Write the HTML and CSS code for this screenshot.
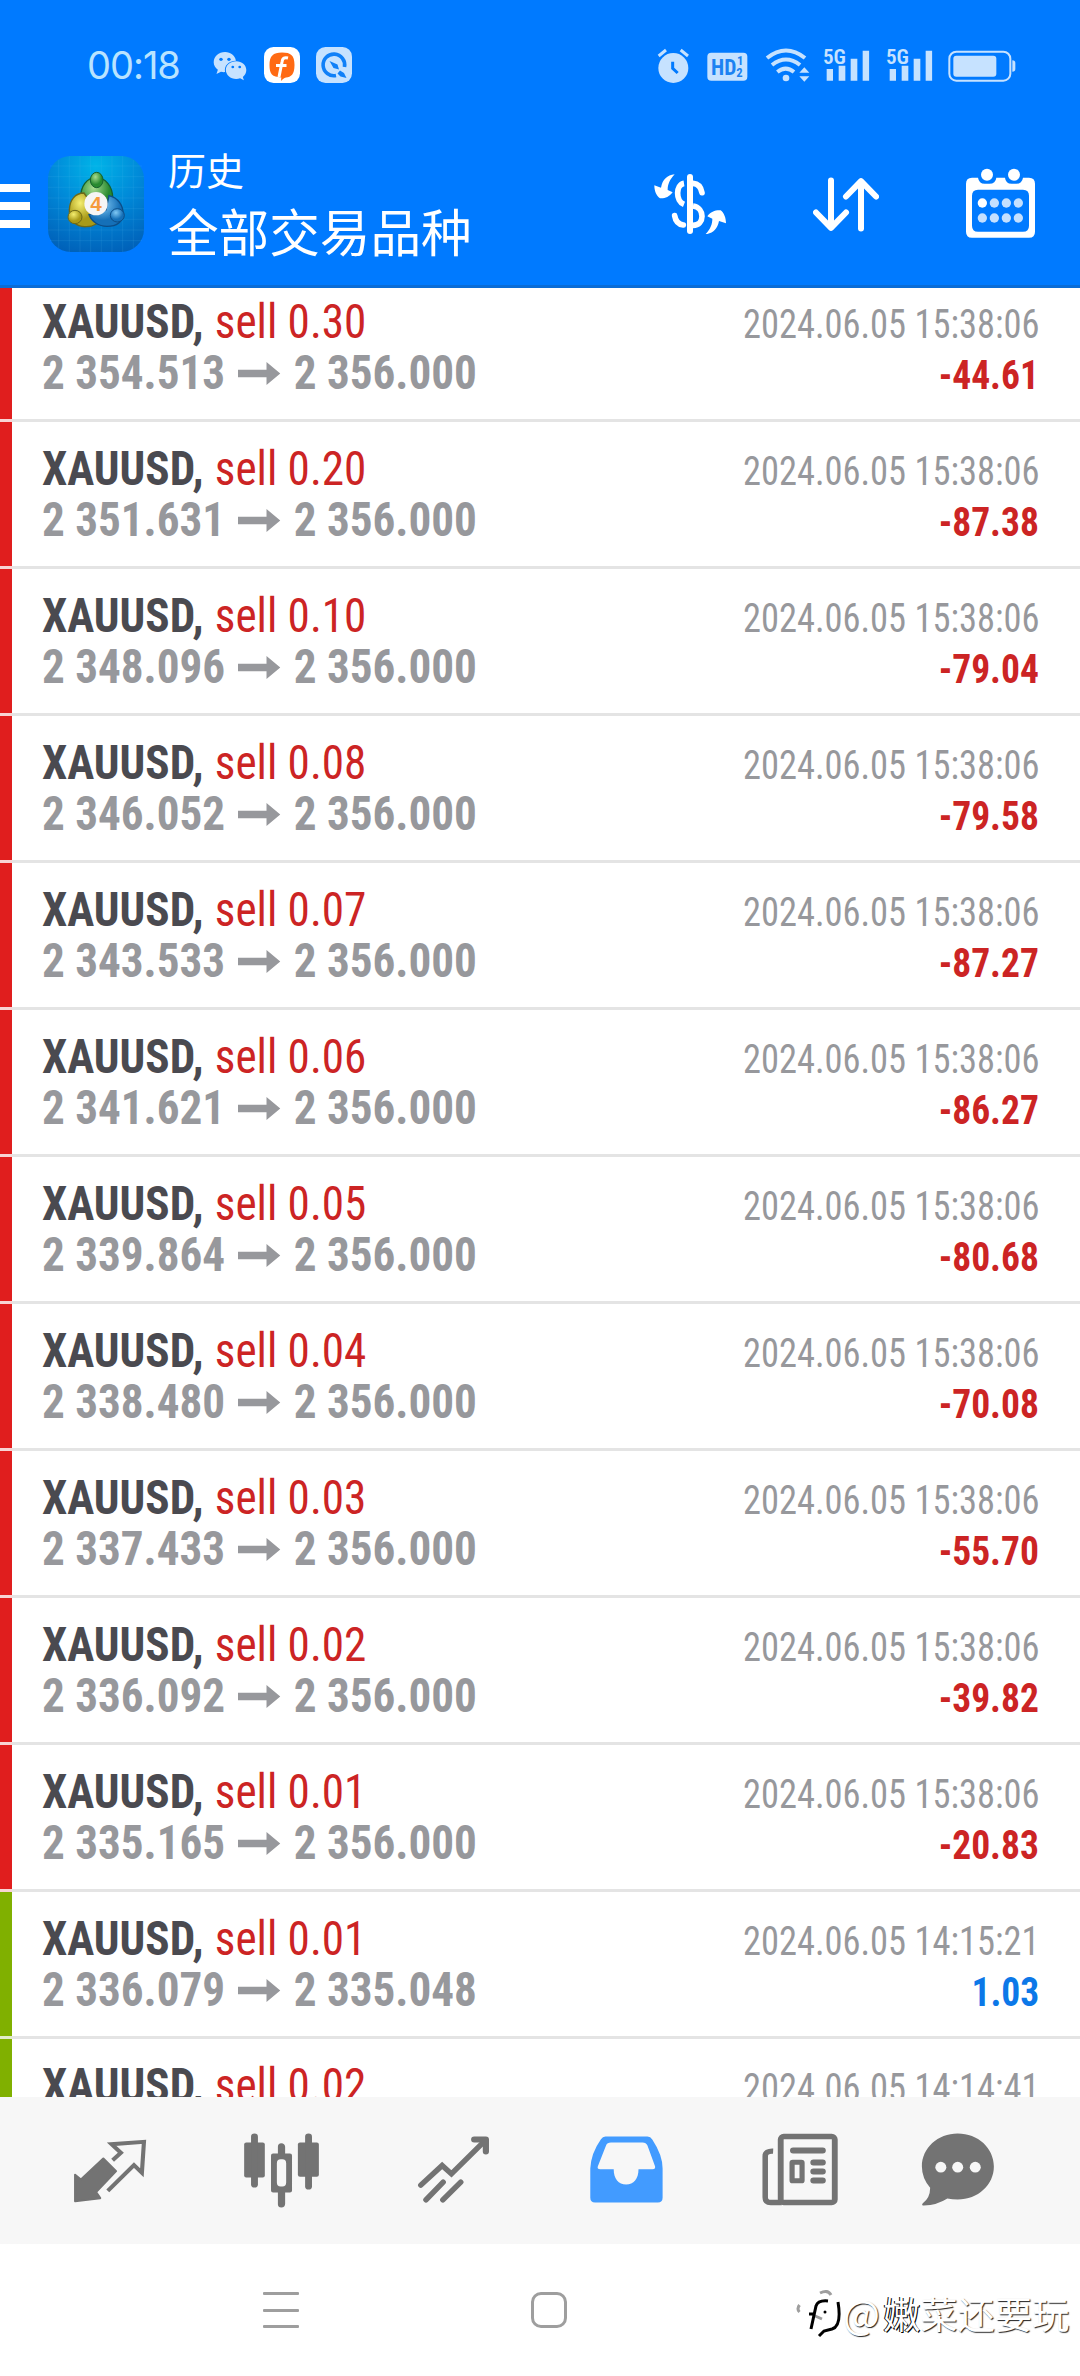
FILE: index.html
```html
<!DOCTYPE html>
<html lang="zh-CN">
<head>
<meta charset="utf-8">
<title>历史</title>
<link rel="stylesheet" href="styles.css">
</head>
<body>
<svg class="defs" width="0" height="0" aria-hidden="true">
  <symbol id="arrow" viewBox="0 0 43 22"><path d="M0 7.3h29V0l14 11-14 11v-7.3H0z" fill="currentColor"/></symbol>
  <symbol id="signal" viewBox="0 0 138 100"><path d="M10 62h19v35H10zM46 52h20v45H46zM82 31h20v66H82zM118 7h20v90h-20z" fill="currentColor"/></symbol>
</svg>

<header class="header">
  <div class="status">
    <span class="clock">00:18</span>
    <svg class="wechat" width="34" height="30" viewBox="619 90 98 90" preserveAspectRatio="none">
      <path fill="#c6e2ff" d="M654 93c-19 0-33 14-33 31 0 10 5 17 12 22l-4 13 13-7c5 1 8 2 12 1-4-18 10-34 31-34-2-15-15-26-31-26z"/>
      <path fill="#c6e2ff" d="M686 121c-17 0-30 12-30 26s13 27 30 27c4 0 8-1 11-2l11 6-3-10c6-5 10-12 10-21 0-14-13-26-29-26z"/>
      <g fill="#007aff"><circle cx="642" cy="115" r="5"/><circle cx="665" cy="115" r="5"/><circle cx="676" cy="138" r="4"/><circle cx="696" cy="138" r="4"/></g>
    </svg>
    <svg class="app" width="36" height="36" viewBox="0 0 36 36">
      <rect width="36" height="36" rx="9.5" fill="#fff"/>
      <path fill="#ff6a13" d="M18 5.500c9 0 12.500 3 12.500 12.500S27 30 22 30.500c-2 .3-4 2.500-5 3.500l.3-3.600C8 30 5.500 27 5.500 18S9 5.500 18 5.500z"/>
      <path fill="none" stroke="#fff" stroke-width="3" d="M24 11c-4-1-5.500.5-6 4l-3 15M12 18.500h10.500"/>
    </svg>
    <svg class="app" width="36" height="36" viewBox="0 0 36 36">
      <rect width="36" height="36" rx="9.500" fill="#c6e2ff"/>
      <path fill="none" stroke="#1080f8" stroke-width="3.600" d="M28.500 20A10.800 10.800 0 1 0 20 28.500"/>
      <path fill="#1080f8" d="M13.500 14l8 3.500 1.500 5-5.500-1.500zM24 23.500l4 2.500 2.500 5-6-1.500-3-3z"/>
    </svg>
    <svg class="sys" width="360" height="36" viewBox="110 82 1080 108">
      <g fill="#c6e2ff" color="#c6e2ff">
        <circle cx="159" cy="142" r="45"/>
        <path d="M115 106l22-18M203 106l-22-18" stroke="#c6e2ff" stroke-width="9"/>
        <path d="M157 123v20l15 14" fill="none" stroke="#007aff" stroke-width="9"/>
        <rect x="261" y="96" width="120" height="84" rx="12"/>
        <path fill="none" stroke="#c6e2ff" stroke-width="12" d="M440 112q57-45 114 0M455 133q42-33 84 0M471 154q25-20 50 0"/>
        <circle cx="497" cy="172" r="10"/>
        <path d="M537 156l15-16 15 16zM537 167h30l-15 16z"/>
        <use href="#signal" x="609" y="83" width="138" height="100"/>
        <use href="#signal" x="798" y="83" width="138" height="100"/>
        <rect x="987" y="93" width="183" height="87" rx="21" fill="none" stroke="#c6e2ff" stroke-width="6"/>
        <rect x="999" y="105" width="129" height="63" rx="9"/>
        <path d="M1176 119q9 0 9 8v18q0 8-9 8z"/>
        <g class="band"><text x="608" y="129" font-size="63" textLength="69" lengthAdjust="spacingAndGlyphs">5G</text>
        <text x="797" y="129" font-size="63" textLength="69" lengthAdjust="spacingAndGlyphs">5G</text></g>
        <g class="hd"><text x="272" y="162" font-size="68" textLength="76" lengthAdjust="spacingAndGlyphs">HD</text>
        <text x="350" y="134" font-size="38">1</text><text x="348" y="169" font-size="38">2</text></g>
      </g>
    </svg>
  </div>
  <div class="toolbar">
    <div class="burger"><i></i><i></i><i></i></div>
    <svg class="logo" width="96" height="96" viewBox="24 18 288 288">
      <defs>
        <radialGradient id="sky" cx=".5" cy=".1" r=".95"><stop offset="0" stop-color="#00b4e8"/><stop offset=".5" stop-color="#0088d8"/><stop offset="1" stop-color="#0060b8"/></radialGradient>
        <radialGradient id="gr" cx=".4" cy=".3"><stop offset="0" stop-color="#a8dc90"/><stop offset="1" stop-color="#288a30"/></radialGradient>
        <radialGradient id="ye" cx=".4" cy=".3"><stop offset="0" stop-color="#f4ee70"/><stop offset="1" stop-color="#a89a18"/></radialGradient>
        <radialGradient id="bl" cx=".4" cy=".3"><stop offset="0" stop-color="#80c8f4"/><stop offset="1" stop-color="#1570b8"/></radialGradient>
      </defs>
      <rect x="24" y="18" width="288" height="288" rx="68" fill="url(#sky)"/>
      <path stroke="#5cc4f0" stroke-opacity=".2" stroke-width="2" d="M56 30v264M88 18v288M120 18v288M152 18v288M184 18v288M216 18v288M248 18v288M280 30v264M30 48h276M24 80h288M24 112h288M24 144h288M24 176h288M24 208h288M24 240h288M30 272h276"/>
      <path d="M122 143c0-34 18-60 46-60s50 25 50 61c0 19-9 35-24 42l-52-36z" fill="url(#gr)" stroke="#17602e" stroke-width="4"/>
      <path d="M132 129c-27 0-43 22-44 50-2 31 21 53 51 51 11 0 22-3 30-8l-15-61z" fill="url(#ye)" stroke="#6d6918" stroke-width="4"/>
      <path d="M207 137c27 6 43 30 42 55-2 26-20 37-48 37-26 0-46-15-54-35l51-14z" fill="url(#bl)" stroke="#0c4d87" stroke-width="4"/>
      <ellipse cx="170" cy="90" rx="19" ry="23" fill="url(#gr)" stroke="#17602e" stroke-width="3"/>
      <ellipse cx="105" cy="201" rx="21" ry="20" fill="url(#ye)" stroke="#6d6918" stroke-width="3"/>
      <ellipse cx="232" cy="196" rx="21" ry="20" fill="url(#bl)" stroke="#0c4d87" stroke-width="3"/>
      <circle cx="168" cy="161" r="35" fill="#f5f5f5"/>
      <text x="168" y="184" text-anchor="middle" class="four">4</text>
    </svg>
    <div class="titles"><div class="t1">历史</div><div class="t2">全部交易品种</div></div>
    <svg class="ic1" width="72" height="60" viewBox="162 131 216 180">
      <path fill="none" stroke="#fff" stroke-width="18" d="M270 140v162" stroke-linecap="round"/>
      <g fill="none" stroke="#fff" stroke-width="17"><path stroke-linecap="round" d="M306 187c-3-17-12-27-27-28"/><path d="M252 159c-25 4-26 53 0 63M279 227c36 5 36 58 0 58"/><path stroke-linecap="round" d="M224 256c3 18 12 26 26 28"/></g>
      <path fill="#fff" d="M224 132c-23 3-36 15-41 40l-20-7c0 17 6 31 17 39 15 1 27-4 38-18l-15-7c0-17 6-31 21-47zM316 312c23-3 36-15 41-40l21 7c0-17-6-31-16-39-16-1-30 4-40 18l15 7c0 17-6 31-21 47z"/>
    </svg>
    <svg class="ic2" width="66" height="55" viewBox="639 140 198 164">
      <path fill="none" stroke="#fff" stroke-width="18" stroke-linecap="round" stroke-linejoin="round" d="M693 150v142M648 246l45 46 45-46M783 294V152M738 198l45-46 45 46"/>
    </svg>
    <svg class="ic3" width="69" height="70" viewBox="1098 112 207 210">
      <path fill="#fff" fill-rule="evenodd" d="M1116 141h18q3 18 20 18h14q19 0 21-18h26q2 18 20 18h14q17 0 20-18h18q18 0 18 18v144q0 18-18 18h-171q-18 0-18-18V159q0-18 18-18zM1134 177q-18 0-18 18v90q0 18 18 18h135q18 0 18-18v-90q0-18-18-18z"/>
      <circle cx="1161" cy="132" r="18" fill="#fff"/><circle cx="1242" cy="132" r="18" fill="#fff"/>
      <circle cx="1147" cy="217" r="14" fill="#fff"/>
      <g fill="#c4e0ff"><circle cx="1183" cy="217" r="14"/><circle cx="1219" cy="217" r="14"/><circle cx="1255" cy="217" r="14"/><circle cx="1147" cy="262" r="14"/><circle cx="1183" cy="262" r="14"/><circle cx="1219" cy="262" r="14"/><circle cx="1255" cy="262" r="14"/></g>
    </svg>
  </div>
</header>

<main class="list">
  <article class="deal loss"><div class="info"><p><b>XAUUSD,</b> <span>sell 0.30</span></p><p class="price">2 354.513<svg><use href="#arrow"/></svg>2 356.000</p></div><div class="meta"><time>2024.06.05 15:38:06</time><strong>-44.61</strong></div></article>
  <article class="deal loss"><div class="info"><p><b>XAUUSD,</b> <span>sell 0.20</span></p><p class="price">2 351.631<svg><use href="#arrow"/></svg>2 356.000</p></div><div class="meta"><time>2024.06.05 15:38:06</time><strong>-87.38</strong></div></article>
  <article class="deal loss"><div class="info"><p><b>XAUUSD,</b> <span>sell 0.10</span></p><p class="price">2 348.096<svg><use href="#arrow"/></svg>2 356.000</p></div><div class="meta"><time>2024.06.05 15:38:06</time><strong>-79.04</strong></div></article>
  <article class="deal loss"><div class="info"><p><b>XAUUSD,</b> <span>sell 0.08</span></p><p class="price">2 346.052<svg><use href="#arrow"/></svg>2 356.000</p></div><div class="meta"><time>2024.06.05 15:38:06</time><strong>-79.58</strong></div></article>
  <article class="deal loss"><div class="info"><p><b>XAUUSD,</b> <span>sell 0.07</span></p><p class="price">2 343.533<svg><use href="#arrow"/></svg>2 356.000</p></div><div class="meta"><time>2024.06.05 15:38:06</time><strong>-87.27</strong></div></article>
  <article class="deal loss"><div class="info"><p><b>XAUUSD,</b> <span>sell 0.06</span></p><p class="price">2 341.621<svg><use href="#arrow"/></svg>2 356.000</p></div><div class="meta"><time>2024.06.05 15:38:06</time><strong>-86.27</strong></div></article>
  <article class="deal loss"><div class="info"><p><b>XAUUSD,</b> <span>sell 0.05</span></p><p class="price">2 339.864<svg><use href="#arrow"/></svg>2 356.000</p></div><div class="meta"><time>2024.06.05 15:38:06</time><strong>-80.68</strong></div></article>
  <article class="deal loss"><div class="info"><p><b>XAUUSD,</b> <span>sell 0.04</span></p><p class="price">2 338.480<svg><use href="#arrow"/></svg>2 356.000</p></div><div class="meta"><time>2024.06.05 15:38:06</time><strong>-70.08</strong></div></article>
  <article class="deal loss"><div class="info"><p><b>XAUUSD,</b> <span>sell 0.03</span></p><p class="price">2 337.433<svg><use href="#arrow"/></svg>2 356.000</p></div><div class="meta"><time>2024.06.05 15:38:06</time><strong>-55.70</strong></div></article>
  <article class="deal loss"><div class="info"><p><b>XAUUSD,</b> <span>sell 0.02</span></p><p class="price">2 336.092<svg><use href="#arrow"/></svg>2 356.000</p></div><div class="meta"><time>2024.06.05 15:38:06</time><strong>-39.82</strong></div></article>
  <article class="deal loss"><div class="info"><p><b>XAUUSD,</b> <span>sell 0.01</span></p><p class="price">2 335.165<svg><use href="#arrow"/></svg>2 356.000</p></div><div class="meta"><time>2024.06.05 15:38:06</time><strong>-20.83</strong></div></article>
  <article class="deal gain"><div class="info"><p><b>XAUUSD,</b> <span>sell 0.01</span></p><p class="price">2 336.079<svg><use href="#arrow"/></svg>2 335.048</p></div><div class="meta"><time>2024.06.05 14:15:21</time><strong>1.03</strong></div></article>
  <article class="deal gain"><div class="info"><p><b>XAUUSD,</b> <span>sell 0.02</span></p></div><div class="meta"><time>2024.06.05 14:14:41</time></div></article>
</main>

<nav class="tabs">
  <svg viewBox="174.2 721.5 290.4 300" preserveAspectRatio="none">
    <path fill="#737373" stroke="#737373" stroke-width="6" stroke-linejoin="round" d="M300 834l37 38-58 63 12 18-73 9V883l17 14z"/>
    <path fill="none" stroke="#737373" stroke-width="12" d="M327 839l24-22-27-26 94-7-6 93-23-23-76 77"/>
  </svg>
  <svg viewBox="673.700 721.500 290.400 300" preserveAspectRatio="none">
    <g fill="#737373"><rect x="709" y="786" width="60" height="105" rx="6"/><rect x="729" y="759" width="20" height="162" rx="10"/><rect x="865" y="786" width="61" height="103" rx="6"/><rect x="886" y="759" width="20" height="168" rx="10"/><path fill-rule="evenodd" d="M793 819h14v-20q0-11 10-11t11 11v20h14q6 0 6 6v105q0 6-6 6h-14v34q0 11-11 11t-10-11v-34h-14q-6 0-6-6V825q0-6 6-6zM815 836q-11 0-11 12v58q0 12 11 12h5q11 0 11-12v-58q0-12-11-12z"/></g>
  </svg>
  <svg viewBox="1173.200 721.500 290.400 300" preserveAspectRatio="none">
    <g fill="none" stroke="#737373" stroke-width="16"><path stroke-linecap="round" d="M1222 914l62-59 27 25 99-101M1237 958l50-53M1286 958l52-53"/><path stroke-width="18" stroke-linecap="round" stroke-linejoin="round" d="M1377 777h34v36"/></g>
  </svg>
  <svg viewBox="104.500 721.500 290.400 300" preserveAspectRatio="none">
    <path fill="#429bff" fill-rule="evenodd" d="M190 768h122q9 0 14 9 30 47 30 87v88q0 14-14 14H160q-14 0-14-14v-88q2-46 31-88 5-8 13-8zM206 786q-11 0-14 8l-24 63q-3 9 7 9h39c0 29 14 46 36 46s36-17 36-46h41q9 0 7-9l-22-62q-4-9-14-9z"/>
  </svg>
  <svg viewBox="604 721.500 290.400 300" preserveAspectRatio="none">
    <g fill="none" stroke="#737373"><rect x="699" y="768" width="157" height="198" rx="9" stroke-width="17"/><path stroke-width="16" d="M677 812q-23-1-23 15v123q0 16 16 16h32"/><rect x="732" y="845" width="29" height="56" rx="2" stroke-width="15"/><path stroke-width="18" stroke-linecap="round" d="M735 810h86M794 846h27M794 873h27M794 900h27"/></g>
  </svg>
  <svg viewBox="1103.500 721.500 290.400 300" preserveAspectRatio="none">
    <path fill="#737373" d="M1213 759c59 0 105 44 105 99s-46 99-105 99q-16 0-30-3-30 20-68 21-8 0-4-6 22-16 22-47-24-29-24-64c0-55 46-99 104-99z"/>
    <g fill="#f7f7f7"><circle cx="1164" cy="860" r="16"/><circle cx="1213" cy="860" r="16"/><circle cx="1264" cy="860" r="16"/></g>
  </svg>
</nav>

<footer class="sysnav">
  <div class="recent"><i></i><i></i><i></i></div>
  <div class="home"></div>
  <div class="mark">
    <svg width="48" height="52" viewBox="0 0 48 52">
      <path fill="none" stroke="#9e9e9e" stroke-width="3" d="M4.500 16q-3 4 0 7M25 4q8-4 11 2M18 26l9 4"/>
      <path fill="none" stroke="#000" stroke-width="3" d="M33 12q-10-1-12 5l-5 23M14 25h6M43 13q4 24-6 27l-8 2-5 5"/>
      <circle cx="30" cy="23" r="1.500"/>
    </svg>
    <span><u>@</u><em>嫩</em>菜还要玩</span>
  </div>
</footer>
</body>
</html>
```
FILE: styles.css
```css
* { box-sizing: border-box; margin: 0; padding: 0; }
body {
  width: 1080px; height: 2376px; overflow: hidden; background: #fff;
  display: flex; flex-direction: column;
  font-family: "Roboto Condensed", Roboto, "Noto Sans CJK SC", sans-serif;
}
.defs { position: absolute; }
svg { display: block; flex: none; }

.header { flex: none; height: 288px; background: #007aff; border-bottom: 3px solid #0a6cd6; }
.status { height: 130px; padding: 0 63px 0 87px; display: flex; align-items: center; }
.clock { width: 93px; font: 38px/46px Inter, sans-serif; letter-spacing: -1px; color: #b9e3ff; white-space: nowrap; }
.wechat { margin: 2px 17px 0 33px; }
.app { margin-right: 16px; }
.sys { margin-left: auto; margin-top: 1px; }
.band { font-family: "Roboto Condensed", sans-serif; font-weight: 600; }
.hd { font-family: "Roboto Condensed", sans-serif; font-weight: 700; fill: #1c82f2; }

.toolbar { height: 155px; display: flex; align-items: center; padding: 0 45px 0 0; }
.burger { width: 30px; height: 44px; display: flex; flex-direction: column; justify-content: space-between; margin: -3px 18px 0 0; }
.burger i { height: 8px; background: #fff; }
.logo { margin-top: -7px; }
.four { font: 700 62px "Liberation Sans", sans-serif; fill: #f59a3c; }
.titles { margin: -12px 0 0 24px; width: 310px; color: #fff; font-family: "Noto Sans CJK SC", sans-serif; white-space: nowrap; }
.t1 { font-size: 38px; line-height: 57px; }
.t2 { font-size: 50.600px; line-height: 66px; }
.ic1 { margin: -7px 0 0 176px; }
.ic2 { margin: -6px 0 0 87px; }
.ic3 { margin: -10px 0 0 auto; }

.list { flex: none; height: 1809px; overflow: hidden; display: flex; flex-direction: column; justify-content: flex-end; }
.deal {
  flex: none; height: 147px; display: flex; justify-content: space-between;
  padding: 21px 41px 0 30px; border-left: 12px solid #e01e1e; position: relative;
  box-shadow: inset 0 -3px #e4e4e4;
}
.deal::after { content: ""; position: absolute; left: -12px; bottom: 0; width: 12px; height: 3px; background: #f8d4d4; }
.gain { border-left-color: #80b000; }
.gain::after { background: #e2ecc8; }
.deal:last-child { height: 58px; overflow: hidden; box-shadow: none; }
.deal:last-child::after { display: none; }
.info { font-size: 48px; line-height: 51px; transform: scaleX(.94); transform-origin: 0 0; white-space: nowrap; }
.info b { color: #4a4a50; margin-right: 1px; }
.info span { color: #cc2424; }
.price { display: flex; align-items: center; font-weight: 700; color: #97989c; }
.price svg { width: 46px; height: 23px; margin: 2px 14px 0 13px; }
.meta { padding-top: 3px; display: flex; flex-direction: column; align-items: flex-end; font-size: 40px; line-height: 51px; color: #97989c; white-space: nowrap; }
.meta time { transform: scaleX(.911); transform-origin: 100% 0; }
.meta strong { color: #cc2424; transform: scaleX(.938); transform-origin: 100% 0; }
.gain strong { color: #0c78e8; }

.tabs { flex: none; height: 147px; background: #f7f7f7; display: flex; align-items: center; gap: 72px; padding-left: 60px; }
.tabs svg { width: 100px; height: 100px; }

.sysnav { flex: none; height: 132px; display: flex; align-items: center; padding-left: 263px; position: relative; }
.recent { width: 36px; height: 36px; display: flex; flex-direction: column; justify-content: space-between; }
.recent i { height: 3px; background: #9e9e9e; border-radius: 1px; }
.home { width: 36px; height: 36px; border: 3px solid #9e9e9e; border-radius: 10px; margin-left: 232px; }
.mark { position: absolute; left: 795px; top: 45px; display: flex; align-items: flex-start; }
.mark span { font: 37.300px/46px "Noto Sans CJK SC", sans-serif; color: #fff; text-shadow: 1px 1px 1px #222; white-space: nowrap; }
.mark u { text-decoration: none; font-size: 39px; margin-right: 3px; }
.mark em { font-style: normal; text-shadow: 1px 1px #000, -1px 0 #000; }
```
